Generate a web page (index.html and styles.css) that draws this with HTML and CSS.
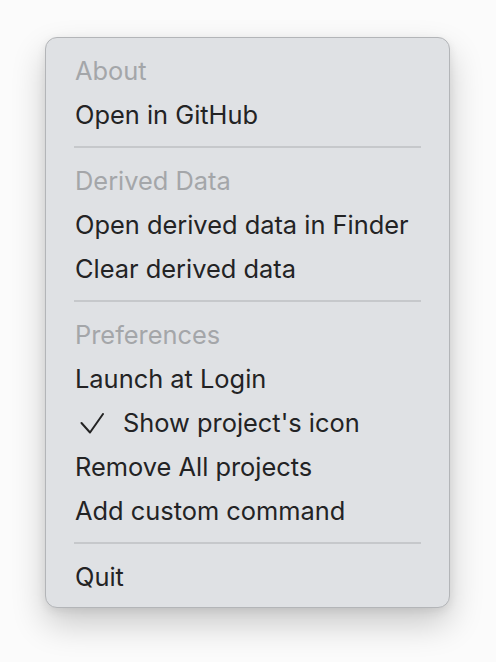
FILE: index.html
```html
<!DOCTYPE html>
<html lang="en">
<head>
<meta charset="utf-8">
<title>Menu</title>
<link rel="stylesheet" href="styles.css">
</head>
<body>
<div class="menu">
  <div class="row header">About</div>
  <div class="row">Open in GitHub</div>
  <div class="sep"></div>
  <div class="row header">Derived Data</div>
  <div class="row">Open derived data in Finder</div>
  <div class="row">Clear derived data</div>
  <div class="sep"></div>
  <div class="row header">Preferences</div>
  <div class="row">Launch at Login</div>
  <div class="row checked"><svg class="check" width="24" height="22" viewBox="0 0 24 22"><polyline points="1.5,10 10,19.5 23,1" fill="none" stroke="#232323" stroke-width="2" stroke-linecap="round" stroke-linejoin="round"/></svg><span>Show project's icon</span></div>
  <div class="row">Remove All projects</div>
  <div class="row">Add custom command</div>
  <div class="sep"></div>
  <div class="row">Quit</div>
</div>
</body>
</html>
```

FILE: styles.css
```css
html, body {
  margin: 0;
  padding: 0;
  background: #fbfbfb;
}
body {
  min-height: 662px;
  box-sizing: border-box;
  padding: 37px 0 0 45px;
  font-family: Inter, "Noto Sans", "Liberation Sans", sans-serif;
}
.menu {
  width: 403px;
  border: 1px solid #b3b5b8;
  border-radius: 12px;
  background: #dfe1e4;
  padding: 10px 0 9px 0;
  box-shadow: 0 16px 34px rgba(0, 0, 0, 0.2), 0 3px 10px rgba(0, 0, 0, 0.08);
}
.row {
  box-sizing: border-box;
  height: 44px;
  padding-top: 2px;
  line-height: 42px;
  padding-left: 29px;
  font-size: 25.4px;
  color: #232324;
  white-space: nowrap;
}
.header {
  color: #a4a6a9;
}
.checked .check {
  margin-left: 5px;
  margin-right: 19px;
  vertical-align: -3px;
}
.sep {
  height: 2px;
  margin: 10px 28px 10px 28px;
  background: #c6c8cb;
}
```
